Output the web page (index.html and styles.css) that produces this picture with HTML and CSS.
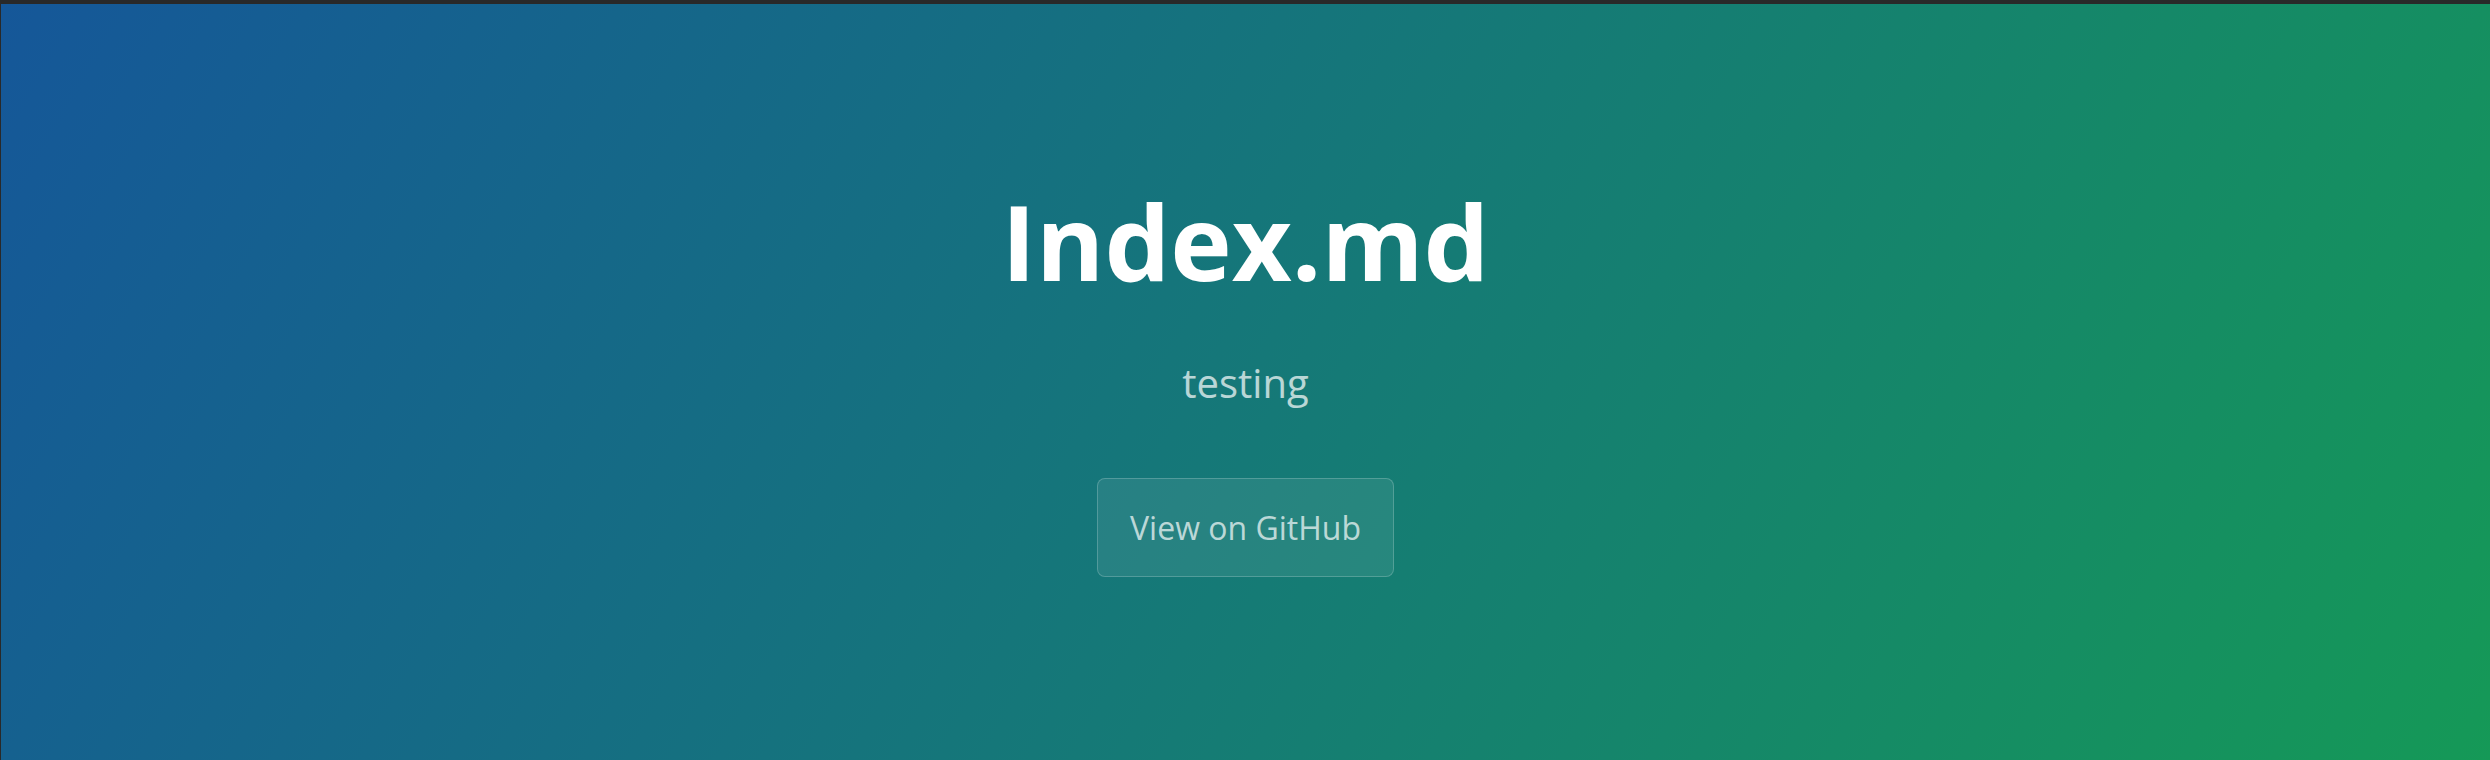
FILE: index.html
```html
<!DOCTYPE html>
<html lang="en">
<head>
<meta charset="utf-8">
<title>Index.md</title>
<link rel="stylesheet" href="styles.css">
</head>
<body>
<section class="page-header">
  <h1 class="project-name">Index.md</h1>
  <h2 class="project-tagline">testing</h2>
  <a class="btn" href="#">View on GitHub</a>
</section>
</body>
</html>
```

FILE: styles.css
```css
html, body {
  margin: 0;
  height: 100%;
}
body {
  background: #292929;
  padding: 4px 0 0 1px;
  box-sizing: border-box;
  overflow: hidden;
  font-family: "Open Sans", "Helvetica Neue", Arial, sans-serif;
}
.page-header {
  display: flex;
  flex-direction: column;
  align-items: center;
  text-align: center;
  padding: 175px 64px 190px;
  color: #fff;
  background-color: #159957;
  background-image: linear-gradient(120deg, #155799, #159957);
}
.project-name {
  margin: 0;
  font-size: 104px;
  font-weight: 700;
  line-height: 124px;
}
.project-tagline {
  margin: 50px 0 0;
  font-size: 40px;
  font-weight: 400;
  line-height: 60px;
  opacity: 0.7;
}
.btn {
  margin-top: 65px;
  display: inline-block;
  padding: 24.5px 32.5px;
  font-size: 32px;
  line-height: 48px;
  color: rgba(255, 255, 255, 0.7);
  text-decoration: none;
  background-color: rgba(255, 255, 255, 0.08);
  border: 1px solid rgba(255, 255, 255, 0.2);
  border-radius: 8px;
}
```
